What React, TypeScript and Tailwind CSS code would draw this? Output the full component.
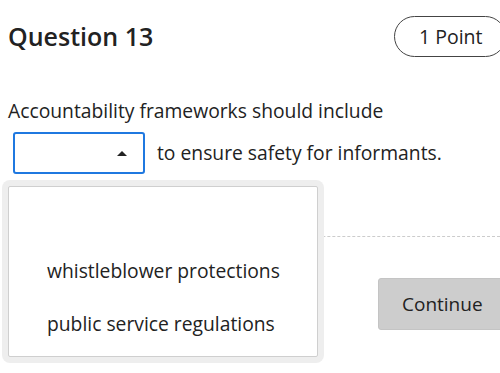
import React from 'react'

const options = ['whistleblower protections', 'public service regulations']

export default function App() {
  return (
    <div className="relative w-[500px] h-[373px] overflow-hidden bg-white text-[#222] font-['Open_Sans',sans-serif]">
      {/* Header */}
      <div className="flex items-center justify-between pl-2 pt-4 h-[57px]">
        <h2 className="text-[25px] font-semibold leading-none">Question 13</h2>
        <div className="flex h-[41px] w-[112px] shrink-0 -mr-[6px] items-center rounded-full border border-[#444] pl-6 text-[19.5px] font-medium">
          1 Point
        </div>
      </div>

      {/* Question body */}
      <p className="mt-[40px] pl-2 text-[19.3px] leading-[27px]">Accountability frameworks should include</p>
      <div className="mt-[8px] flex items-center pl-[13px] text-[19.3px]">
        <button
          type="button"
          className="flex h-[42px] w-[132px] items-center justify-end rounded-[3px] border-2 border-[#1f78e0] pr-[16px]"
        >
          <span className="h-0 w-0 border-x-[5px] border-b-[5px] border-x-transparent border-b-[#222]" />
        </button>
        <span className="ml-[12px]">to ensure safety for informants.</span>
      </div>

      {/* Divider + actions */}
      <div className="mt-[62px] ml-2 border-t border-dashed border-[#ccc]" />
      <div className="mt-[41px] flex justify-end">
        <button
          type="button"
          className="-mr-[4px] h-[52px] w-[126px] rounded-[3px] border border-[#c4c4c4] bg-[#cdcdcd] pl-[23px] text-left text-[19px] text-[#222]"
        >
          Continue
        </button>
      </div>

      {/* Open dropdown */}
      <div className="absolute left-[2px] top-[180px] h-[183px] w-[322px] rounded-[8px] bg-[#eeeeee] p-[6px]">
        <ul className="h-full rounded-[2px] border border-[#cfcfcf] bg-white pt-[57px] pl-[38px]">
          {options.map((o) => (
            <li key={o} className="h-[53px] text-[19.3px] leading-[53px]">
              {o}
            </li>
          ))}
        </ul>
      </div>
    </div>
  )
}
